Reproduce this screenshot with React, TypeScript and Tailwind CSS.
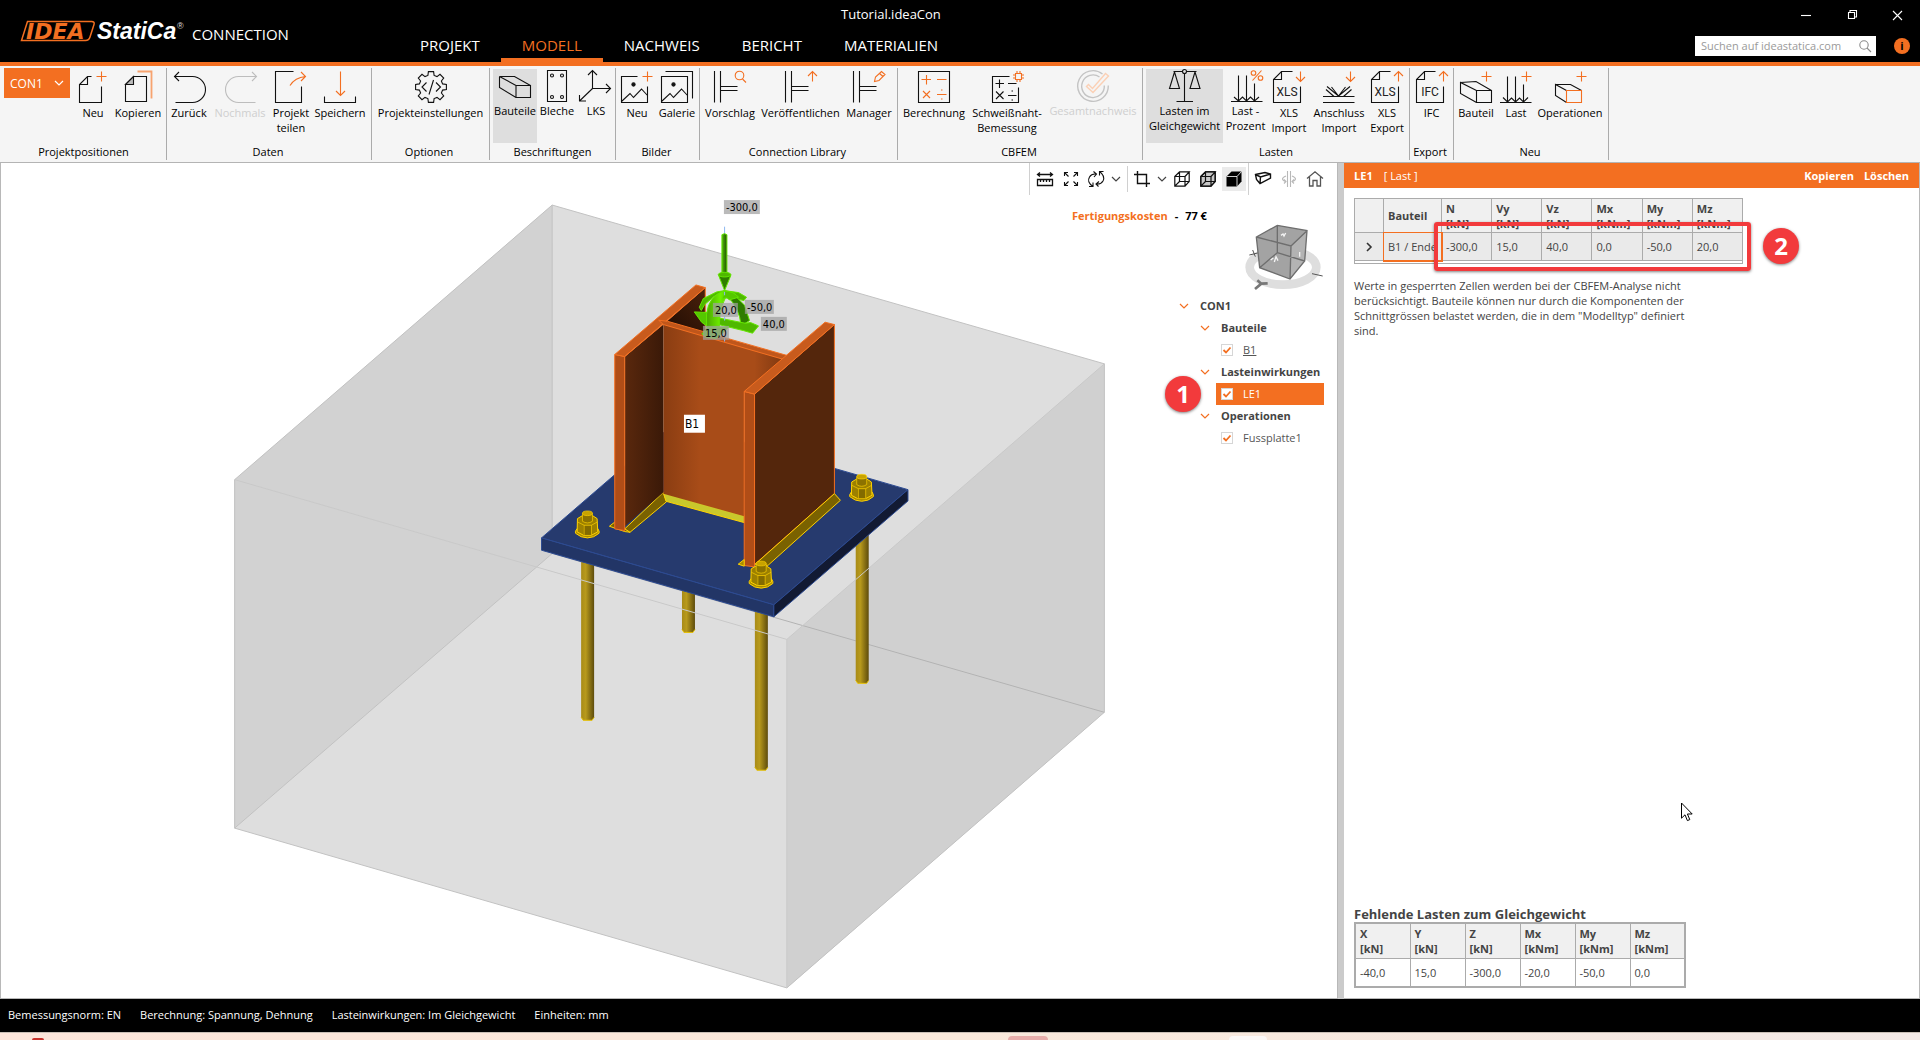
import { useState } from 'react';
import type { ReactNode } from 'react';
import clsx from 'clsx';

const ORANGE = '#f36f21';

function Icon({ children, stroke = '#111', w = 32, h = 32 }: { children: ReactNode; stroke?: string; w?: number; h?: number }) {
  return (
    <svg
      width={w}
      height={h}
      viewBox={`0 0 ${w} ${h}`}
      fill="none"
      stroke={stroke}
      strokeWidth="1.1"
      className="shrink-0 overflow-visible"
      aria-hidden="true"
    >
      {children}
    </svg>
  );
}

const Plus = ({ x, y = 5.5 }: { x: number; y?: number }) => (
  <path d={`M${x - 5} ${y}h10M${x} ${y - 5}v10`} stroke={ORANGE} />
);
const ArrowDown = ({ x, len = 10 }: { x: number; len?: number }) => (
  <path d={`M${x} .5v${len}m-4.5 -4.5l4.5 4.5l4.5 -4.5`} stroke={ORANGE} />
);
const ArrowUp = ({ x }: { x: number }) => <path d={`M${x} 10.5v-10m-4.5 4.5l4.5 -4.5l4.5 4.5`} stroke={ORANGE} />;

const gearPath = () => {
  const pts: string[] = [];
  for (let i = 0; i < 8; i++) {
    const base = (i * Math.PI) / 4;
    [[-0.26, 12], [-0.17, 15.6], [0.17, 15.6], [0.26, 12]].forEach(([a, r]) => {
      pts.push(`${(16 + r * Math.sin(base + a)).toFixed(1)} ${(16 - r * Math.cos(base + a)).toFixed(1)}`);
    });
  }
  return `M${pts.join('L')}Z`;
};

const icons: Record<string, ReactNode> = {
  newItem: (
    <Icon>
      <path d="M14.5 5.5H10.5L2.5 13.5V31.5H24.5V15.5M10.5 5.5V13.5H2.5" />
      <Plus x={24.5} />
    </Icon>
  ),
  copy: (
    <Icon>
      <path d="M11.5 5.5H24.5V30.5H3.5V13.5Z" />
      <path d="M11.5 5.5V13.5H3.5Z" fill="#bbb" />
      <path d="M15.5 .5H29.5V27.5" stroke="#f7a36f" strokeWidth="1.8" />
    </Icon>
  ),
  undo: (
    <Icon>
      <path d="M1.5 5.5H19.5A13 13 0 0 1 19.5 31.5H2.5M6 1L1.5 5.5L6 10" />
    </Icon>
  ),
  redo: (
    <Icon stroke="#bdbdbd">
      <path d="M32.5 5.5H14.5A13 13 0 0 0 14.5 31.5H31.5M28 1L32.5 5.5L28 10" />
    </Icon>
  ),
  share: (
    <Icon>
      <path d="M18.5 .5H.5V31.5H26.5V15.5" />
      <path d="M15 14.5Q20 6.5 30.5 5.5M26 1L30.5 5.5L26 10" stroke={ORANGE} />
    </Icon>
  ),
  save: (
    <Icon>
      <path d="M.5 25.5V31.5H31.5V25.5" />
      <ArrowDown x={16.5} len={24} />
    </Icon>
  ),
  settings: (
    <Icon>
      <path d={gearPath()} />
      <path d="M11.5 11.5L7 16L11.5 20.5M21 11.5L25.5 16L21 20.5M18.5 9L14 23.5" />
    </Icon>
  ),
  member: (
    <Icon>
      <path d="M17 16.5L.5 7.5H15.5L31.5 16.5M.5 7.5V18.5L17 28.5M17 16.5H31.5V28.5H17Z" />
    </Icon>
  ),
  plate: (
    <Icon>
      <path d="M6.5 1.5H25.5V32.5H6.5Z" />
      {[[11, 6.5], [21, 6.5], [11, 28], [21, 28]].map(([x, y]) => (
        <circle key={`${x}-${y}`} cx={x} cy={y} r="1.5" />
      ))}
    </Icon>
  ),
  lcs: (
    <Icon>
      <path d="M12.5 1.5V19.5H30.5M12.5 19.5L-.5 32M8 6L12.5 1.5L17 6M26 15L30.5 19.5L26 24M-.5 26V32H6" />
    </Icon>
  ),
  picture: (
    <Icon>
      <path d="M16.5 5.5H.5V31.5H26.5V15.5M.5 30.5L9 22.5L12.5 26.5L20.5 18L26.5 24.5" />
      <circle cx="12.5" cy="13.5" r="1.6" fill="#111" />
      <Plus x={26.5} />
    </Icon>
  ),
  gallery: (
    <Icon>
      <path d="M.5 5.5H26.5V31.5H.5ZM.5 30.5L9 22.5L12.5 26.5L20.5 18L26.5 24.5M4.5 .5H31.5V27.5" />
      <circle cx="12.5" cy="13.5" r="1.6" fill="#111" />
    </Icon>
  ),
  suggest: (
    <Icon>
      <path d="M.5 0V31.5M6.5 0V31.5M6.5 15.5H23.5M6.5 19.5H23.5" />
      <path d="M28.5 8L32 11.5" stroke={ORANGE} />
      <circle cx="25.5" cy="4.5" r="4.3" stroke={ORANGE} />
    </Icon>
  ),
  publish: (
    <Icon>
      <path d="M.5 0V31.5M6.5 0V31.5M6.5 15.5H23.5M6.5 19.5H23.5" />
      <ArrowUp x={27.5} />
    </Icon>
  ),
  manager: (
    <Icon>
      <path d="M.5 0V31.5M6.5 0V31.5M6.5 15.5H23.5M6.5 19.5H23.5" />
      <path d="M21.5 10.5L22.5 6L28.5 .5L32 3.5L26 9.5ZM26.5 2.5L30 5.5" stroke={ORANGE} />
    </Icon>
  ),
  calculate: (
    <Icon>
      <path d="M.5 .5H31.5V31.5H.5Z" />
      <path
        d="M3.5 8.5H13M8.5 4V13.5M19 8.5H28.5M5 20L12 27M12 20L5 27M19 23.5H28.5M23 19h1.5M23 28h1.5"
        stroke={ORANGE}
      />
    </Icon>
  ),
  weldDesign: (
    <Icon>
      <path d="M18.5 5.5H1.5V31.5H27.5V16.5M4.5 12.5H13M8.5 8.5V17M17 12.5H25.5M5 20.5L12.5 28M12.5 20.5L5 28M17 24.5H25.5M20.5 20h1.5M20.5 29h1.5" />
      <path
        d="M24.5 2.5H30.5V8.5H24.5ZM26 2.5V0M29 2.5V0M26 8.5V11M29 8.5V11M24.5 4H22M24.5 7H22M30.5 4H33M30.5 7H33"
        stroke={ORANGE}
      />
    </Icon>
  ),
  overall: (
    <Icon stroke="#c4c4c4">
      <path d="M25.5 5A15.3 15.3 0 1 0 31.3 16.5M22.5 8A11.3 11.3 0 1 0 27.3 16.5" strokeWidth="1.4" />
      <path d="M9.5 17.5L11.5 15.5L15.5 19.5L28.5 4.5L31.5 7L16 23.5Z" stroke="#fbd0b5" strokeWidth="1.4" />
    </Icon>
  ),
  scales: (
    <Icon>
      <path d="M4.5 2.5H13.5M17.5 2.5H27.5M15.5 4.5V32.5M7.5 32.5H24M5.5 3L.5 19.5H10.5L5.5 3M26 3L21 19.5H31L26 3" />
      <circle cx="15.5" cy="2.5" r="2" />
    </Icon>
  ),
  loadPercent: (
    <Icon>
      <path d="M1 32.5H32.5M8.5 6.5V32M16.5 6.5V32M24.5 14.5V32M4 28L8.5 32L12.5 28L16.5 32L20.5 28L24.5 32L29 28" />
      <path d="M31.5 1.5L22.5 11.5" stroke={ORANGE} />
      <circle cx="23.5" cy="4" r="2.3" stroke={ORANGE} />
      <circle cx="30.5" cy="9" r="2.3" stroke={ORANGE} />
    </Icon>
  ),
  xlsImport: (
    <Icon>
      <path d="M19.5 .5H8.5L.5 8.5V31.5H27.5V15.5M8.5 .5V8.5H.5" />
      <text x="14" y="25" textAnchor="middle" className="font-[Roboto] text-[12px]" fill="#222" stroke="none">XLS</text>
      <ArrowDown x={27.5} />
    </Icon>
  ),
  connImport: (
    <Icon>
      <path d="M0 25.5H31.5M0 31.5H31.5M15.5 25L4 15.5M15.5 25L27 15.5M11 25.5L3 18.5M20.5 25.5L28.5 18.5M15.5 25L8.5 16M15.5 25L22.5 16" />
      <ArrowDown x={27.5} />
    </Icon>
  ),
  xlsExport: (
    <Icon>
      <path d="M19.5 .5H8.5L.5 8.5V31.5H27.5V15.5M8.5 .5V8.5H.5" />
      <text x="14" y="25" textAnchor="middle" className="font-[Roboto] text-[12px]" fill="#222" stroke="none">XLS</text>
      <ArrowUp x={27.5} />
    </Icon>
  ),
  ifc: (
    <Icon>
      <path d="M19.5 .5H8.5L.5 8.5V31.5H27.5V15.5M8.5 .5V8.5H.5" />
      <text x="14" y="25" textAnchor="middle" className="font-[Roboto] text-[12px]" fill="#222" stroke="none">IFC</text>
      <ArrowUp x={27.5} />
    </Icon>
  ),
  newMember: (
    <Icon>
      <path d="M16.5 19.5L.5 11.5V22.5L16.5 31.5M.5 11.5L16 10.5L31.5 19.5M16.5 19.5H31.5V31.5H16.5Z" />
      <Plus x={26.5} />
    </Icon>
  ),
  newLoad: (
    <Icon>
      <path d="M0 31.5H31.5M7.5 5.5V31M15.5 5.5V31M23.5 13.5V31M3 26.5L7.5 31L11.5 27L15.5 31L19.5 27L23.5 31L28 26.5" />
      <Plus x={26.5} />
    </Icon>
  ),
  newOperation: (
    <Icon>
      <path d="M12.5 19.5L1.5 13.5V24.5L12.5 31.5M1.5 13.5H16.5L27.5 19.5" />
      <path d="M12.5 19.5H27.5V31.5H12.5Z" stroke={ORANGE} />
      <Plus x={27.5} />
    </Icon>
  ),
};

interface RibbonItem {
  label: string[];
  icon: string;
  width: string;
  toggle?: boolean;
  active?: boolean;
  disabled?: boolean;
}

interface RibbonGroup {
  name: string;
  width: string;
  items: RibbonItem[];
}

const ribbon: RibbonGroup[] = [
  {
    name: 'Projektpositionen',
    width: 'w-[167px] pl-1',
    items: [
      { label: ['Neu'], icon: 'newItem', width: 'w-10 ml-[3px]' },
      { label: ['Kopieren'], icon: 'copy', width: 'w-[50px]' },
    ],
  },
  {
    name: 'Daten',
    width: 'w-[205px] pl-px',
    items: [
      { label: ['Zurück'], icon: 'undo', width: 'w-[42px]' },
      { label: ['Nochmals'], icon: 'redo', width: 'w-[60px]', disabled: true },
      { label: ['Projekt', 'teilen'], icon: 'share', width: 'w-[42px]' },
      { label: ['Speichern'], icon: 'save', width: 'w-14' },
    ],
  },
  {
    name: 'Optionen',
    width: 'w-[118px]',
    items: [{ label: ['Projekteinstellungen'], icon: 'settings', width: 'w-full' }],
  },
  {
    name: 'Beschriftungen',
    width: 'w-[126px] pl-[3px]',
    items: [
      { label: ['Bauteile'], icon: 'member', width: 'w-11', toggle: true, active: true },
      { label: ['Bleche'], icon: 'plate', width: 'w-10', toggle: true },
      { label: ['LKS'], icon: 'lcs', width: 'w-[38px]', toggle: true },
    ],
  },
  {
    name: 'Bilder',
    width: 'w-[84px] pl-px',
    items: [
      { label: ['Neu'], icon: 'picture', width: 'w-10' },
      { label: ['Galerie'], icon: 'gallery', width: 'w-10' },
    ],
  },
  {
    name: 'Connection Library',
    width: 'w-[198px] pl-px',
    items: [
      { label: ['Vorschlag'], icon: 'suggest', width: 'w-[58px]' },
      { label: ['Veröffentlichen'], icon: 'publish', width: 'w-[83px]' },
      { label: ['Manager'], icon: 'manager', width: 'w-[54px]' },
    ],
  },
  {
    name: 'CBFEM',
    width: 'w-[245px] pl-px',
    items: [
      { label: ['Berechnung'], icon: 'calculate', width: 'w-[70px]' },
      { label: ['Schweißnaht-', 'Bemessung'], icon: 'weldDesign', width: 'w-[76px]' },
      { label: ['Gesamtnachweis'], icon: 'overall', width: 'w-24', toggle: true, disabled: true },
    ],
  },
  {
    name: 'Lasten',
    width: 'w-[267px] pl-[3px]',
    items: [
      { label: ['Lasten im', 'Gleichgewicht'], icon: 'scales', width: 'w-[77px]', toggle: true, active: true },
      { label: ['Last -', 'Prozent'], icon: 'loadPercent', width: 'w-[45px]', toggle: true },
      { label: ['XLS', 'Import'], icon: 'xlsImport', width: 'w-[42px]' },
      { label: ['Anschluss', 'Import'], icon: 'connImport', width: 'w-[58px]' },
      { label: ['XLS', 'Export'], icon: 'xlsExport', width: 'w-[38px]' },
    ],
  },
  {
    name: 'Export',
    width: 'w-11',
    items: [{ label: ['IFC'], icon: 'ifc', width: 'w-full' }],
  },
  {
    name: 'Neu',
    width: 'w-[155px] pl-px',
    items: [
      { label: ['Bauteil'], icon: 'newMember', width: 'w-[42px]' },
      { label: ['Last'], icon: 'newLoad', width: 'w-[38px]' },
      { label: ['Operationen'], icon: 'newOperation', width: 'w-[70px]' },
    ],
  },
];

function Chevron({ color = '#444', size = 10 }: { color?: string; size?: number }) {
  return (
    <svg width={size} height={size} viewBox="0 0 10 10" fill="none" stroke={color} strokeWidth="1.2" className="shrink-0" aria-hidden="true">
      <path d="M1 3L5 7L9 3" />
    </svg>
  );
}

function Header() {
  const tabs = ['PROJEKT', 'MODELL', 'NACHWEIS', 'BERICHT', 'MATERIALIEN'];
  const [tab, setTab] = useState('MODELL');

  return (
    <header className="grid h-[66px] shrink-0 grid-cols-[399px_1fr_auto] border-b-4 border-[#f36f21] bg-black text-white">
      <div className="flex items-start gap-2 pt-4 pl-5">
        <svg width="164" height="30" viewBox="0 -4 164 30" className="overflow-visible" role="img" aria-label="IDEA StatiCa">
          <path d="M7.5 1.5H71.5Q75 1.5 74 4.5L70 17Q69 20.5 65.5 20.5H1.5Z" fill="none" stroke={ORANGE} strokeWidth="1.5" />
          <text x="6" y="19" className="font-['DejaVu_Sans'] text-[22px] font-bold italic" fill={ORANGE}>IDEA</text>
          <text x="77" y="19" className="font-['Liberation_Sans'] text-[23px] font-bold italic" fill="#fff">StatiCa</text>
          <text x="157" y="9" className="font-['Liberation_Sans'] text-[9px]" fill="#ddd">®</text>
        </svg>
        <span className="pt-[7px] text-[15px] leading-[22px]">CONNECTION</span>
      </div>

      <div className="flex min-w-0 flex-col justify-between">
        <div className="pt-[5px] pl-[442px] text-[13px] leading-[18px]">Tutorial.ideaCon</div>
        <nav className="flex">
          {tabs.map(name => (
            <button
              key={name}
              type="button"
              onClick={() => setTab(name)}
              className={clsx(
                'h-8 border-b-4 px-[21px] pt-[2px] text-[15px] leading-6',
                name === tab ? 'border-[#f36f21] text-[#f36f21]' : 'border-transparent'
              )}
            >
              {name}
            </button>
          ))}
        </nav>
      </div>

      <div className="flex flex-col">
        <div className="flex justify-end gap-[30px] pt-[7px] pr-[14px]">
          <button type="button" aria-label="Minimieren">
            <Icon w={16} h={16} stroke="#fff"><path d="M3 8.5H13" /></Icon>
          </button>
          <button type="button" aria-label="Wiederherstellen">
            <Icon w={16} h={16} stroke="#fff"><path d="M4.5 5.5H10.5V11.5H4.5ZM6 5.5V3.5H12.5V10H10.5" /></Icon>
          </button>
          <button type="button" aria-label="Schließen">
            <Icon w={16} h={16} stroke="#fff"><path d="M3 4L12 13M12 4L3 13" /></Icon>
          </button>
        </div>
        <div className="mt-[13px] flex items-center pr-[10px]">
          <label className="mr-[18px] flex h-5 w-[181px] items-center bg-white pr-[5px] pl-[6px]">
            <input
              type="search"
              aria-label="Suchen"
              placeholder="Suchen auf ideastatica.com"
              className="min-w-0 flex-1 text-[11px] leading-4 text-black outline-none placeholder:text-[#9a9a9a]"
            />
            <Icon w={12} h={12} stroke="#8a8a8a">
              <circle cx="5" cy="5" r="4.2" />
              <path d="M8 8L12 12" />
            </Icon>
          </label>
          <button type="button" aria-label="Info" className="flex size-4 items-center justify-center rounded-full bg-[#f36f21] text-[11px] leading-4 font-bold text-black">
            i
          </button>
        </div>
      </div>
    </header>
  );
}

function Ribbon() {
  return (
    <div className="flex h-[97px] shrink-0 border-b border-[#b4b4b4] bg-[#f5f5f5] py-[2px] text-[11px] leading-[15px] text-black">
      {ribbon.map((group, index) => (
        <section key={group.name + index} className={clsx('flex flex-col justify-between border-r border-[#ababab]', group.width)}>
          <div className="flex items-start">
            {index === 0 && (
              <button type="button" className="flex h-[30px] w-[66px] shrink-0 items-center justify-between bg-[#f36f21] pr-[6px] pl-[6px] text-[12px] text-white">
                CON1
                <Chevron color="#fff" />
              </button>
            )}
            {group.items.map((item, i) => (
              <button
                key={i}
                type="button"
                disabled={item.disabled}
                className={clsx(
                  'mt-px flex h-[74px] shrink-0 flex-col items-center gap-[2px] whitespace-nowrap',
                  !item.toggle && 'pt-[2px]',
                  item.active && 'bg-[#dedede]',
                  item.disabled && 'text-[#cfcfcf]',
                  item.width
                )}
              >
                {icons[item.icon]}
                <span>
                  {item.label.map(line => (
                    <span key={line} className="block">{line}</span>
                  ))}
                </span>
              </button>
            ))}
          </div>
          <h2 className="pr-[3px] pb-px text-center">{group.name}</h2>
        </section>
      ))}
    </div>
  );
}

function Nut({ x, y }: { x: number; y: number }) {
  return (
    <g transform={`translate(${x} ${y})`} stroke="#ffd200" strokeWidth="3">
      <path d="M-36 20L-31 12H31L35 20V26Q20 40 0 40Q-20 40 -36 26Z" fill="#a88a00" />
      <path d="M-30 -18L-15 -27H15L29 -18L31 22L12 32H-12L-31 22Z" fill="#9c8000" />
      <path d="M-12 4H12V31H-12Z" fill="#836b00" stroke="none" />
      <path d="M-30 -8L-10 2V31M-10 2H12V31M12 2L30 -8" fill="none" strokeWidth="2" />
      <path d="M-15 -34V-10Q0 0 15 -10V-34" fill="#8c7200" strokeWidth="2" />
      <ellipse cx="0" cy="-34" rx="15" ry="7" fill="#c8a300" strokeWidth="2" />
    </g>
  );
}

const rods = [
  { x: 581, top: 555, bottom: 721 },
  { x: 682, top: 580, bottom: 633 },
  { x: 755, top: 600, bottom: 771 },
  { x: 856, top: 530, bottom: 684 },
];

const forceLabels = [
  { text: '-300,0', x: 724, y: 200, w: 36 },
  { text: '-50,0', x: 745, y: 300, w: 29 },
  { text: '40,0', x: 761, y: 317, w: 26 },
  { text: '20,0', x: 713, y: 303, w: 25 },
  { text: '15,0', x: 703, y: 326, w: 26 },
];

function Scene() {
  return (
    <svg viewBox="0 163 1338 836" className="absolute inset-0 h-full w-full" role="img" aria-label="3D-Modell">
      <defs>
        <linearGradient id="rod">
          <stop offset="0" stopColor="#a88b17" />
          <stop offset=".35" stopColor="#b89a1c" />
          <stop offset="1" stopColor="#5e4c0c" />
        </linearGradient>
        <linearGradient id="web">
          <stop offset="0" stopColor="#8a3d12" />
          <stop offset=".3" stopColor="#a84c18" />
          <stop offset=".75" stopColor="#a84c18" />
          <stop offset="1" stopColor="#7e3811" />
        </linearGradient>
        <linearGradient id="inner">
          <stop offset="0" stopColor="#5a280d" />
          <stop offset="1" stopColor="#3a1908" />
        </linearGradient>
        <linearGradient id="pocket" x2="1" y1="1" y2="0">
          <stop offset="0" stopColor="#1c0b03" />
          <stop offset="1" stopColor="#4b210b" />
        </linearGradient>
        <linearGradient id="shaft">
          <stop offset="0" stopColor="#52b80a" />
          <stop offset="1" stopColor="#1f4d00" />
        </linearGradient>
        <linearGradient id="band">
          <stop offset="0" stopColor="#4aa800" />
          <stop offset=".6" stopColor="#6ff000" />
          <stop offset="1" stopColor="#52c000" />
        </linearGradient>
      </defs>

      {/* concrete block */}
      <path d="M234 480L552 205L1105 364V713L787 989L234 829Z" fill="#dedede" />
      <path d="M234 480L552 205V554L234 829Z" fill="#d2d2d2" />
      <path d="M787 640L1105 364V713L787 989Z" fill="#d0d0d0" />
      <g fill="none" stroke="#c2c2c2">
        <path d="M234 480L552 205L1105 364V713L787 989L234 829Z" />
        <path d="M552 205V554L234 829" />
        <path d="M552 554L1105 713" stroke="#b3b3b3" />
      </g>

      {rods.map(r => (
        <g key={r.x}>
          <path d={`M${r.x} ${r.top}H${r.x + 13}V${r.bottom - 3}L${r.x + 11} ${r.bottom}H${r.x + 2}L${r.x} ${r.bottom - 3}Z`} fill="url(#rod)" />
          <path d={`M${r.x} ${r.bottom - 3}L${r.x + 2} ${r.bottom}H${r.x + 11}L${r.x + 13} ${r.bottom - 3}`} fill="none" stroke="#e6c000" />
        </g>
      ))}
      <path d="M234 480L787 640L1105 364M787 640V989" fill="none" stroke="#c9c9c9" />

      <g transform="translate(530 190) scale(.33333)" strokeLinejoin="round">
        {/* base plate */}
        <g stroke="#2c4a92" strokeWidth="3">
          <path d="M34 1045L436 698L1135 900L732 1246Z" fill="#263a6e" />
          <path d="M34 1045L732 1246V1282L34 1082Z" fill="#223566" />
          <path d="M1135 900V934L732 1282V1246Z" fill="#121a33" />
        </g>

        {/* welds */}
        <path d="M238 1010L256 996L300 1028L284 1026Z" fill="#7a6200" stroke="#ffd200" strokeWidth="3" />
        <path d="M284 1018L400 908L410 936L300 1028Z" fill="#7a6200" stroke="#ffd200" strokeWidth="3" />
        <path d="M400 910L650 980V1001L408 935Z" fill="#c9c82c" stroke="#ffd200" strokeWidth="3" />

        {/* column */}
        <g stroke={ORANGE} strokeWidth="3">
          <path d="M400 403L526 293V440Z" fill="url(#pocket)" />
          <path d="M284 500L400 403V908L284 1010Z" fill="url(#inner)" stroke="none" />
          <path d="M254 494L284 500V1023L254 1018Z" fill="#b04d17" />
          <path d="M254 494L498 285L526 293L284 500Z" fill="#c85b1d" />
          <path d="M400 403L765 508L643 605V980L400 912Z" fill="url(#web)" stroke="none" />
          <path d="M386 391L412 394L786 501L762 509L400 404Z" fill="#bf561b" />
          <path d="M674 613L914 404V912L674 1125Z" fill="#54260c" />
          <path d="M643 605L674 613V1132L643 1128Z" fill="#b04d17" />
          <path d="M643 605L886 397L914 404L674 613Z" fill="#c85b1d" />
          <path d="M284 500L400 403" fill="none" />
        </g>
        <path d="M676 1124L914 912L932 932L715 1127L690 1130Z" fill="#7a6200" stroke="#ffd200" strokeWidth="3" />
        <path d="M625 1124L643 1110V1130Z" fill="#a88a00" stroke="#ffd200" strokeWidth="3" />

        <Nut x={172} y={1005} />
        <Nut x={996} y={895} />
        <Nut x={694} y={1156} />

        {/* load arrows */}
        <path d="M584 110V132M584 445V455" stroke="#8db8f0" strokeWidth="3" />
        <g stroke="#63e600" strokeWidth="3">
          <path d="M576 134Q584 128 591 134V250H576Z" fill="url(#shaft)" />
          <path d="M566 256Q584 242 603 256L584 302Z" fill="#2f7d00" />
          <ellipse cx="584" cy="254" rx="19" ry="7" fill="#4fb800" />
          <path d="M508 352L520 326L560 306L584 302L552 320L524 344L514 362Z" fill="#4fb800" />
          <path d="M584 302L626 308L650 322L642 332L616 326Z" fill="#4fb800" />
          <path d="M493 366L536 368L530 408L515 397Z" fill="#55c800" />
          <path d="M590 318L620 322L644 346L659 392L634 408Q628 350 590 318Z" fill="#2f7d00" />
          <path d="M566 384L646 400L662 398L686 408L668 430L640 422L566 404Z" fill="#4fb800" />
          <path d="M516 432L534 412L596 412L560 446L528 442Z" fill="#55c800" />
          <path d="M530 412V372Q536 318 584 302L600 308Q568 336 568 412Z" fill="url(#band)" />
          <path d="M584 303Q612 304 626 322L598 330Q590 318 576 330Z" fill="#55c800" />
        </g>
        <path d="M584 306V316M584 380V392" stroke="#8db8f0" strokeWidth="3" />
      </g>

      <g className="font-['DejaVu_Sans_Condensed','DejaVu_Sans'] text-[11px]">
        {forceLabels.map(l => (
          <g key={l.text}>
            <rect x={l.x} y={l.y} width={l.w} height="14" fill="#a0a0a0" fillOpacity=".72" />
            <text x={l.x + 2} y={l.y + 11} fill="#000">{l.text}</text>
          </g>
        ))}
        <rect x="684" y="415" width="21" height="18" fill="#fff" />
        <text x="685" y="428" className="text-[12px]" fill="#000">B1</text>
      </g>
    </svg>
  );
}

function ViewToolbar() {
  return (
    <div className="flex h-8 items-center border-l border-[#d0d0d0] pl-[7px]">
      <button type="button" aria-label="Bemaßung">
        <Icon w={16} h={16}>
          <path d="M.5 8.5H15.5V14.5H.5ZM3.5 8.5V11M6.5 8.5V11M9.5 8.5V11M12.5 8.5V11M.5 3.5H15.5M3 1.5L.5 3.5L3 5.5M13 1.5L15.5 3.5L13 5.5" strokeWidth="1.3" />
        </Icon>
      </button>
      <button type="button" aria-label="Alles zeigen" className="ml-[10px]">
        <Icon w={16} h={16}>
          <path d="M1.5 5V1.5H5M1.5 1.5L5.5 5.5M11 1.5H14.5V5M14.5 1.5L10.5 5.5M1.5 11V14.5H5M1.5 14.5L5.5 10.5M14.5 11V14.5H11M14.5 14.5L10.5 10.5" />
        </Icon>
      </button>
      <button type="button" aria-label="Drehen" className="ml-[9px] flex items-center gap-[7px]">
        <Icon w={16} h={16}>
          <path d="M1 15.5H5V11.5M5 15.5Q-1.5 11 1.5 6Q3.5 2.5 8 3M5.5 .5L8.5 3L6 6M15.5 .5H11.5V4.5M11.5 .5Q17.5 5 15 10Q13 13.5 8.5 13M11 10.5L8 13L10.5 15.5" />
        </Icon>
        <Chevron />
      </button>
      <button type="button" aria-label="Zuschneiden" className="ml-[6px] flex h-[26px] items-center gap-[7px] border-l border-[#d0d0d0] pl-[6px]">
        <Icon w={16} h={16}>
          <path d="M3.5 0V12.5H16M0 3.5H12.5V16" strokeWidth="1.4" />
        </Icon>
        <Chevron />
      </button>
      <button type="button" aria-label="Drahtmodell" className="ml-[7px]">
        <Icon w={16} h={16}>
          <path d="M.8 5.5H11V15.2H.8ZM.8 5.5L5.5 .8H15.2L11 5.5M15.2 .8V10.5L11 15.2M5.5 .8V10.5H15.2M5.5 10.5L.8 15.2" strokeWidth="1.2" />
        </Icon>
      </button>
      <button type="button" aria-label="Transparent" className="ml-[10px]">
        <Icon w={16} h={16}>
          <path d="M.8 5.5L5.5 .8H15.2V10.5L11 15.2H.8Z" fill="#c8c8c8" />
          <path d="M.8 5.5H11V15.2H.8ZM.8 5.5L5.5 .8H15.2L11 5.5M15.2 .8V10.5L11 15.2M5.5 .8V10.5H15.2M5.5 10.5L.8 15.2" strokeWidth="1.2" />
        </Icon>
      </button>
      <button type="button" aria-label="Vollmodell" className="ml-[6px] flex size-6 items-center justify-center bg-[#ebebeb]">
        <Icon w={16} h={16}>
          <path d="M.5 5.5L5.5 .5H15.5V10.5L11 15.5H.5Z" fill="#000" stroke="none" />
          <path d="M.5 5.5H11V15.5M11 5.5L15.5 .5" stroke="#fff" strokeWidth=".8" />
        </Icon>
      </button>
      <button type="button" aria-label="Bauteilansicht" className="ml-[2px] flex h-8 items-center border-l border-[#d0d0d0] pl-[6px]">
        <Icon w={16} h={16}>
          <path d="M.5 3.5L10 1.5L15.5 3V7L5 12.5L1.5 8.5ZM.5 3.5L5.5 6L15.5 3M5.5 6L5 12.5" strokeWidth="1.4" />
        </Icon>
      </button>
      <button type="button" aria-label="Spiegeln" disabled className="ml-[10px]">
        <Icon w={16} h={16} stroke="#b8b8b8">
          <path d="M6.5 0V16M9.5 0V16M5 5Q-2 8 5 10.5M11 5Q18 8 11 10.5M3 8.5L5 10.5L3 12.5M13 8.5L11 10.5L13 12.5" />
        </Icon>
      </button>
      <button type="button" aria-label="Startansicht" className="ml-[10px]">
        <Icon w={16} h={16} stroke="#555">
          <path d="M0 7.5L8 .8L16 7.5M2.5 6V15H6V9.5H10V15H13.5V6" strokeWidth="1.3" />
        </Icon>
      </button>
    </div>
  );
}

function ViewCube() {
  return (
    <svg width="84" height="70" viewBox="666 186 252 210" aria-hidden="true">
      <ellipse cx="789" cy="322" rx="100" ry="52" fill="none" stroke="#dedede" strokeWidth="26" />
      <path d="M709 231L772 196L861 212L854 303L810 357L719 323Z" fill="#a3a3a3" />
      <path d="M813 258L861 212L854 303L810 357Z" fill="#b3b3b3" />
      <path d="M709 231L772 196L861 212L854 303L810 357L719 323ZM709 231L813 258L861 212M813 258L810 357M772 196V278L719 323M772 278L854 303" fill="none" stroke="#6e6e6e" strokeWidth="4" />
      <path d="M783 226L789 222L792 228L797 219M752 300L760 294M763 306L768 290L774 302M839 276V290" fill="none" stroke="#f4f4f4" strokeWidth="4" />
      <path d="M688 285L713 279M698 270L706 290M876 341L908 348" stroke="#555" strokeWidth="3" />
      <path d="M705 387L724 371L743 370M724 371L712 361" fill="none" stroke="#777" strokeWidth="8" />
    </svg>
  );
}

function Marker({ value }: { value: number }) {
  return (
    <span className="flex size-9 items-center justify-center rounded-full bg-[#f23a3c] text-[24px] leading-none font-bold text-white shadow-[0_1px_3px_rgba(0,0,0,0.5)]">
      {value}
    </span>
  );
}

function TreeItem({ label, selected, underline }: { label: string; selected?: boolean; underline?: boolean }) {
  const [checked, setChecked] = useState(true);

  return (
    <label className={clsx('relative ml-[38px] flex h-[22px] items-center gap-[10px] pl-[5px]', selected ? 'bg-[#f36f21] text-white' : 'text-[#555]')}>
      <span className="relative size-3 shrink-0">
        <input
          type="checkbox"
          checked={checked}
          onChange={e => setChecked(e.target.checked)}
          className="block size-3 appearance-none border border-[#d6d6d6] bg-white"
        />
        {checked && (
          <svg viewBox="0 0 12 12" className="pointer-events-none absolute inset-0" fill="none" stroke={ORANGE} strokeWidth="1.8" aria-hidden="true">
            <path d="M2.5 6L5 8.5L9.5 3.5" />
          </svg>
        )}
      </span>
      <span className={clsx(underline && 'underline')}>{label}</span>
      {selected && (
        <span className="absolute top-1/2 -left-[51px] -translate-y-1/2">
          <Marker value={1} />
        </span>
      )}
    </label>
  );
}

function TreeGroup({ label, children }: { label: string; children: ReactNode }) {
  return (
    <div>
      <button type="button" className="ml-[21px] flex h-[22px] items-center gap-[10px] font-bold whitespace-nowrap">
        <span className="flex w-3 justify-center"><Chevron color={ORANGE} /></span>
        {label}
      </button>
      {children}
    </div>
  );
}

function Viewport() {
  return (
    <main className="relative min-w-0 flex-1 overflow-hidden border-x border-b border-[#b8b8b8] bg-white">
      <Scene />
      <div className="absolute top-0 right-0 flex w-[308px] flex-col">
        <ViewToolbar />
        <div className="flex h-[100px] items-start justify-between pr-[11px] pl-[43px]">
          <p className="pt-3 text-[11px] leading-[18px] font-bold text-black">
            <span className="text-[#f36f21]">Fertigungskosten</span>
            <span className="px-[7px]">-</span>77 €
          </p>
          <div className="pt-[27px]"><ViewCube /></div>
        </div>
        <div className="mr-[13px] w-[146px] self-end text-[11px] leading-4 text-[#444]">
          <button type="button" className="flex h-[22px] items-center gap-[10px] font-bold">
            <span className="flex w-3 justify-center"><Chevron color={ORANGE} /></span>
            CON1
          </button>
          <TreeGroup label="Bauteile"><TreeItem label="B1" underline /></TreeGroup>
          <TreeGroup label="Lasteinwirkungen"><TreeItem label="LE1" selected /></TreeGroup>
          <TreeGroup label="Operationen"><TreeItem label="Fussplatte1" /></TreeGroup>
        </div>
      </div>
    </main>
  );
}

const loadColumns = [
  ['N', '[kN]', '-300,0'],
  ['Vy', '[kN]', '15,0'],
  ['Vz', '[kN]', '40,0'],
  ['Mx', '[kNm]', '0,0'],
  ['My', '[kNm]', '-50,0'],
  ['Mz', '[kNm]', '20,0'],
];

const missingLoads = [
  ['X', '[kN]', '-40,0'],
  ['Y', '[kN]', '15,0'],
  ['Z', '[kN]', '-300,0'],
  ['Mx', '[kNm]', '-20,0'],
  ['My', '[kNm]', '-50,0'],
  ['Mz', '[kNm]', '0,0'],
];

function LoadPanel() {
  return (
    <aside className="relative flex w-[576px] shrink-0 flex-col border-r border-b border-[#b8b8b8] bg-white text-[11px] leading-[15px] text-[#444]">
      <div className="flex h-[25px] items-center bg-[#f36f21] px-[10px] text-white">
        <h2 className="font-bold">LE1</h2>
        <span className="ml-[11px]">[ Last ]</span>
        <button type="button" className="ml-auto font-bold">Kopieren</button>
        <button type="button" className="ml-[10px] font-bold">Löschen</button>
      </div>

      <div className="flex flex-1 flex-col px-[10px] pt-[10px] pb-[10px]">
        <div className="relative w-fit">
          <table className="w-[389px] table-fixed border-collapse border border-[#ababab] text-left">
            <thead>
              <tr className="h-[34px] bg-[#f0f0f0]">
                <th className="w-[29px] border border-[#ababab]" aria-label="Auswahl" />
                <th className="w-[58px] border border-[#ababab] px-1">Bauteil</th>
                {loadColumns.map(([name, unit]) => (
                  <th key={name} className="border border-[#ababab] px-1">{name}<br />{unit}</th>
                ))}
              </tr>
            </thead>
            <tbody>
              <tr className="h-7 bg-[#eaeaea] whitespace-nowrap">
                <td className="border border-[#ababab]">
                  <svg width="10" height="12" viewBox="0 0 10 12" fill="none" stroke="#333" strokeWidth="1.6" className="mx-auto" aria-hidden="true">
                    <path d="M3 2L7 6L3 10" />
                  </svg>
                </td>
                <td className="overflow-hidden border border-[#f36f21] pl-1 outline outline-[#f36f21]">B1 / Ende</td>
                {loadColumns.map(([name, , value]) => (
                  <td key={name} className="border border-[#ababab] px-1">{value}</td>
                ))}
              </tr>
            </tbody>
          </table>
          <div className="h-[3px] border-x border-b border-[#ababab]" />
          <div className="pointer-events-none absolute top-6 left-20 h-[49px] w-[317px] rounded-[3px] border-4 border-[#f23a3c] shadow-[0_1px_3px_rgba(0,0,0,0.5)]" />
          <div className="absolute top-[30px] left-[409px]"><Marker value={2} /></div>
        </div>

        <p className="mt-[14px] max-w-[340px]">
          Werte in gesperrten Zellen werden bei der CBFEM-Analyse nicht berücksichtigt. Bauteile können nur durch die
          Komponenten der Schnittgrössen belastet werden, die in dem "Modelltyp" definiert sind.
        </p>

        <h3 className="mt-auto text-[13px] leading-4 font-bold">Fehlende Lasten zum Gleichgewicht</h3>
        <table className="w-[332px] table-fixed border-collapse border-2 border-[#ababab] text-left">
          <thead>
            <tr className="h-[35px] bg-[#f0f0f0]">
              {missingLoads.map(([name, unit]) => (
                <th key={name} className="border border-[#ababab] px-1">{name}<br />{unit}</th>
              ))}
            </tr>
          </thead>
          <tbody>
            <tr className="h-[29px]">
              {missingLoads.map(([name, , value]) => (
                <td key={name} className="border border-[#ababab] px-1">{value}</td>
              ))}
            </tr>
          </tbody>
        </table>
      </div>

      {/* mouse pointer */}
      <svg width="12" height="20" viewBox="0 0 12 20" className="pointer-events-none absolute top-[639px] left-[337px]" aria-hidden="true">
        <path d="M.5 1V16.2L4 12.8L6.4 18.6L8.8 17.6L6.4 12H11.2Z" fill="#fff" stroke="#000" />
      </svg>
    </aside>
  );
}

const status = [
  ['Bemessungsnorm:', 'EN'],
  ['Berechnung:', 'Spannung, Dehnung'],
  ['Lasteinwirkungen:', 'Im Gleichgewicht'],
  ['Einheiten:', 'mm'],
];

export default function App() {
  return (
    <div className="flex h-screen flex-col overflow-hidden bg-white font-['Open_Sans',sans-serif]">
      <Header />
      <Ribbon />
      <div className="flex min-h-0 flex-1">
        <Viewport />
        <div className="w-[6px] shrink-0 bg-[#cbcbcb]" />
        <LoadPanel />
      </div>
      <footer className="flex h-[33px] shrink-0 items-center gap-[19px] bg-black px-2 text-[11px] text-white">
        {status.map(([key, value]) => (
          <span key={key}>{key} <span className="font-medium">{value}</span></span>
        ))}
      </footer>
      {/* sliver of the desktop taskbar */}
      <div className="flex h-2 shrink-0 items-end border-t border-[#c9bfb6] bg-linear-to-r from-[#fce5da] via-[#f9e8da] to-[#f3e9e6]">
        <div className="ml-8 h-[2px] w-3 rounded-t-full bg-[#c8322b]" />
        <div className="ml-[964px] h-1 w-10 rounded-t bg-[#e8aeab]" />
        <div className="ml-[181px] h-1 w-[38px] rounded-t bg-[#fbf8f7]" />
      </div>
    </div>
  );
}
